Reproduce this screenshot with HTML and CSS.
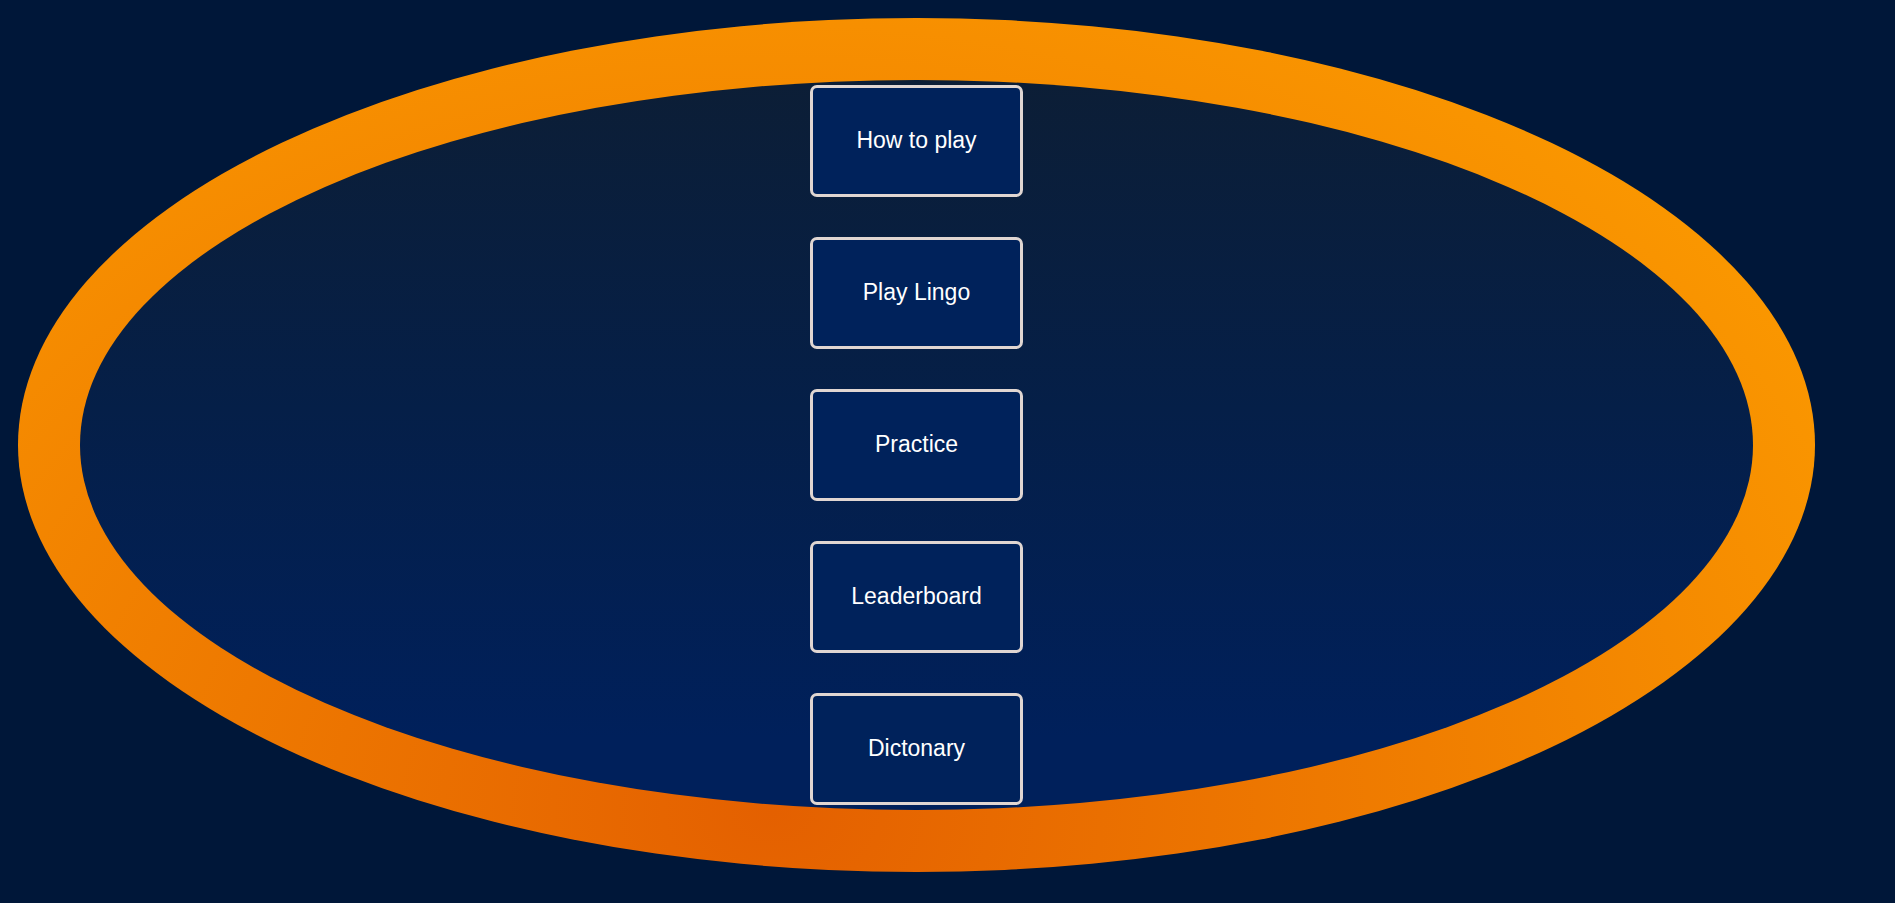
FILE: index.html
```html
<!DOCTYPE html>
<html lang="en">
<head>
<meta charset="utf-8">
<meta name="viewport" content="width=device-width, initial-scale=1">
<title>Lingo</title>
<link rel="stylesheet" href="styles.css">
</head>
<body>
<main class="ring">
  <nav class="menu" aria-label="Main menu">
    <button class="menu-button" type="button">How to play</button>
    <button class="menu-button" type="button">Play Lingo</button>
    <button class="menu-button" type="button">Practice</button>
    <button class="menu-button" type="button">Leaderboard</button>
    <button class="menu-button" type="button">Dictonary</button>
  </nav>
</main>
</body>
</html>
```
FILE: styles.css
```css
* {
  box-sizing: border-box;
}

body {
  margin: 0;
  padding: 18px 80px 18px 18px;
  min-height: 100vh;
  background: #001739;
  font-family: "Liberation Sans", Arial, sans-serif;
}

.ring {
  border-radius: 50%;
  padding: 62px;
  background: radial-gradient(ellipse at 42% 93%, #e46000, #ffa300);
}

.menu {
  display: flex;
  flex-direction: column;
  align-items: center;
  gap: 40px;
  padding: 5px;
  border-radius: 50%;
  background: linear-gradient(#0c1e36, #051f48 45%, #00205b 90%);
}

.menu-button {
  width: 213px;
  height: 112px;
  padding: 0 6px 2px;
  border: 3px solid #e0d6d2;
  border-radius: 7px;
  background: #00225b;
  color: #fff;
  font-family: inherit;
  font-size: 23px;
  cursor: pointer;
}
```
